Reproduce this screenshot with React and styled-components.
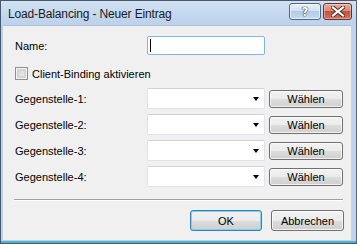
import React from "react";
import styled, { createGlobalStyle } from "styled-components";

const GlobalStyle = createGlobalStyle`
  html, body {
    margin: 0;
    padding: 0;
    background: #ffffff;
  }
  body {
    font-family: "Liberation Sans", Arial, sans-serif;
    font-size: 11px;
    color: #000;
  }
`;

const rows = [1, 2, 3, 4];

const App = () => {
  return (
    <>
      <GlobalStyle />
      <Window>
        <TitleBar>
          <Title>Load-Balancing - Neuer Eintrag</Title>
          <Controls>
            <HelpButton>
              <HelpGlyph>?</HelpGlyph>
            </HelpButton>
            <CloseButton>
              <svg width="14" height="11" viewBox="0 0 14 11">
                <path
                  d="M2 1.5 L12 9.5 M12 1.5 L2 9.5"
                  stroke="#4a2a28"
                  strokeWidth="4"
                  strokeLinecap="square"
                  fill="none"
                />
                <path
                  d="M2 1.5 L12 9.5 M12 1.5 L2 9.5"
                  stroke="#ffffff"
                  strokeWidth="2.2"
                  strokeLinecap="square"
                  fill="none"
                />
              </svg>
            </CloseButton>
          </Controls>
        </TitleBar>
        <Frame>
          <Body>
            <FieldRow>
              <Label>Name:</Label>
              <TextInput>
                <Caret />
              </TextInput>
            </FieldRow>
            <CheckRow>
              <CheckBox />
              <Label>Client-Binding aktivieren</Label>
            </CheckRow>
            <Rows>
              {rows.map((n) => (
                <FieldRow key={n} $tall>
                  <Label>Gegenstelle-{n}:</Label>
                  <Combo>
                    <Arrow />
                  </Combo>
                  <Button $width={74} $height={18}>Wählen</Button>
                </FieldRow>
              ))}
            </Rows>
            <Separator />
            <Footer>
              <Button $width={72} $height={21} $primary>OK</Button>
              <Button $width={73} $height={21}>Abbrechen</Button>
            </Footer>
          </Body>
        </Frame>
      </Window>
    </>
  );
};

export default App;

const Window = styled.div`
  width: 357px;
  height: 244px;
  box-sizing: border-box;
  border: 1px solid #48596f;
  border-right-color: #56667c;
  background: #bdd3ec;
  display: flex;
  flex-direction: column;
  overflow: hidden;
`;

const TitleBar = styled.div`
  height: 24px;
  flex-shrink: 0;
  display: flex;
  align-items: flex-start;
  justify-content: space-between;
  background: linear-gradient(#d3e2f3, #c3d7ee 60%, #bcd2eb);
  padding: 0 4px 0 7px;
`;

const Title = styled.span`
  font-size: 12px;
  letter-spacing: -0.15px;
  color: #1a1a1a;
  margin-top: 6px;
`;

const Controls = styled.div`
  display: flex;
  gap: 2px;
  margin-top: 2px;
`;

const HelpButton = styled.div`
  width: 32px;
  height: 17px;
  box-sizing: border-box;
  border: 1px solid #4f6783;
  border-radius: 3px;
  background: linear-gradient(#e9f1fa, #d3e2f3 45%, #b4cbe6 50%, #c6daf0);
  box-shadow: inset 0 0 0 1px rgba(255, 255, 255, 0.6);
  display: flex;
  align-items: center;
  justify-content: center;
`;

const HelpGlyph = styled.span`
  font-family: "DejaVu Sans", sans-serif;
  font-weight: bold;
  font-size: 12px;
  line-height: 1;
  color: #ffffff;
  text-shadow: 0 0 1px #2c3e56, 0 0 1px #2c3e56, 0 0 1px #2c3e56;
`;

const CloseButton = styled.div`
  width: 29px;
  height: 17px;
  box-sizing: border-box;
  border: 1px solid #6b2f28;
  border-radius: 3px;
  background: linear-gradient(#e9aa9c, #d98a77 45%, #c4533e 50%, #d2735f);
  box-shadow: inset 0 0 0 1px rgba(255, 255, 255, 0.35);
  display: flex;
  align-items: center;
  justify-content: center;
`;

const Frame = styled.div`
  flex: 1;
  display: flex;
  padding: 0 5px 3px 2px;
  background: linear-gradient(#bdd3ec, #bdd3ec calc(100% - 2px), #4fb6c9 calc(100% - 2px));
`;

const Body = styled.div`
  flex: 1;
  background: #f0f0f0;
  border-top: 1px solid #aebfd4;
  padding: 10px 7px 0 12px;
  display: flex;
  flex-direction: column;
`;

const FieldRow = styled.div`
  display: grid;
  grid-template-columns: 128px 118px 74px;
  column-gap: 4px;
  align-items: center;
  height: ${(p) => (p.$tall ? "21px" : "19px")};
`;

const Label = styled.span`
  font-size: 11px;
  white-space: nowrap;
`;

const TextInput = styled.div`
  height: 19px;
  box-sizing: border-box;
  border: 1px solid #7eb4ea;
  border-radius: 2px;
  background: #ffffff;
  display: flex;
  align-items: center;
  padding-left: 2px;
`;

const Caret = styled.div`
  width: 1px;
  height: 13px;
  background: #000;
`;

const CheckRow = styled.div`
  display: flex;
  align-items: center;
  gap: 4px;
  margin-top: 12px;
  height: 13px;
`;

const CheckBox = styled.div`
  width: 13px;
  height: 13px;
  box-sizing: border-box;
  border: 1px solid #8e8f8f;
  background: #f4f4f4;
  box-shadow: inset 0 0 0 1px #f4f4f4, inset 0 0 0 3px #d4d4d4;
  background-image: linear-gradient(135deg, #cbcfd5, #f6f6f6);
`;

const Rows = styled.div`
  display: flex;
  flex-direction: column;
  gap: 5px;
  margin-top: 8px;
`;

const Combo = styled.div`
  height: 21px;
  box-sizing: border-box;
  border: 1px solid #e2e3ea;
  border-top-color: #d0d2d8;
  border-radius: 2px;
  background: #ffffff;
  display: flex;
  align-items: center;
  justify-content: flex-end;
  padding-right: 5px;
`;

const Arrow = styled.div`
  width: 0;
  height: 0;
  border-left: 3.5px solid transparent;
  border-right: 3.5px solid transparent;
  border-top: 4px solid #000;
  margin-top: 1px;
`;

const Button = styled.div`
  width: ${(p) => p.$width}px;
  height: ${(p) => p.$height}px;
  box-sizing: border-box;
  border: 1px solid ${(p) => (p.$primary ? "#3c7fb1" : "#707070")};
  border-radius: 3px;
  background: linear-gradient(#f2f2f2, #ebebeb 50%, #dddddd 50%, #cfcfcf);
  box-shadow: inset 0 0 0 1px
    ${(p) => (p.$primary ? "#7fd2f6" : "rgba(255, 255, 255, 0.7)")};
  display: flex;
  align-items: center;
  justify-content: center;
  font-size: 11px;
  color: #000;
`;

const Separator = styled.div`
  margin: 12px 0 0 -1px;
  width: 329px;
  height: 1px;
  background: #a0a0a0;
  border-bottom: 1px solid #ffffff;
`;

const Footer = styled.div`
  display: flex;
  justify-content: flex-end;
  gap: 9px;
  margin-top: 9px;
`;
